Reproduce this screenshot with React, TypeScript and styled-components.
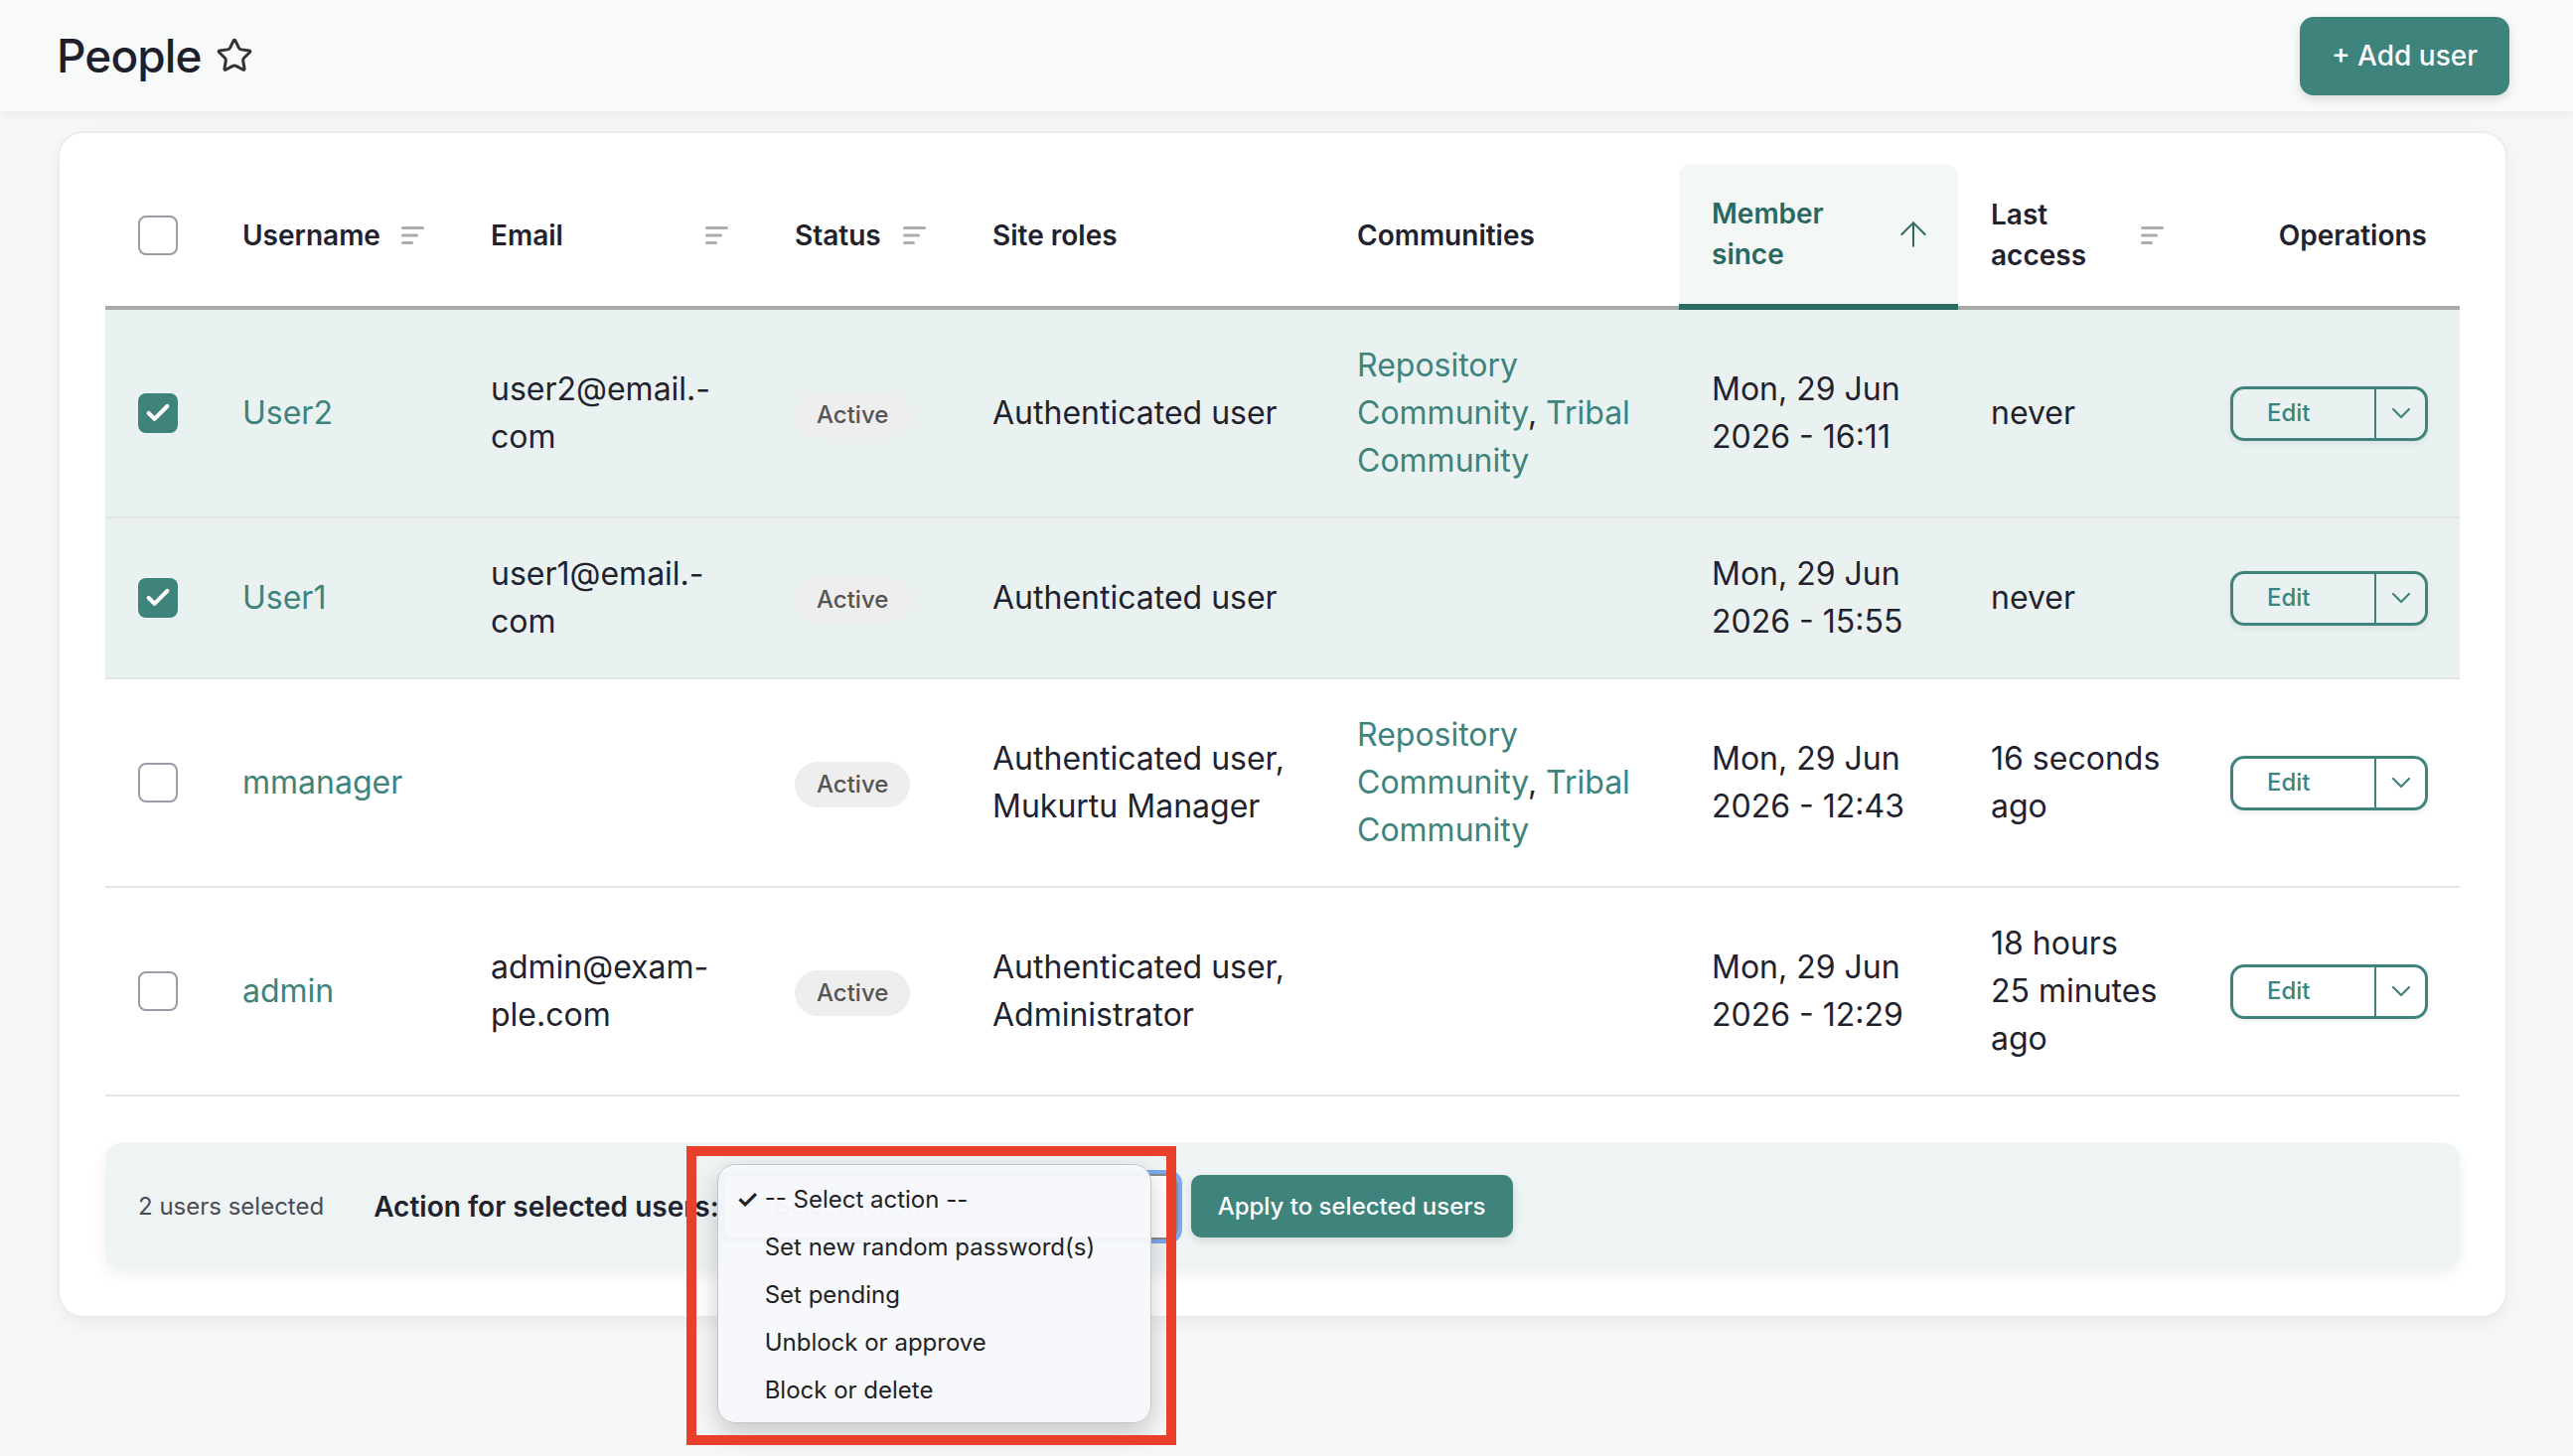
import React from 'react';
import styled, { createGlobalStyle } from 'styled-components';
import { Star, ArrowUp, ChevronDown, Check } from 'lucide-react';

const GlobalStyle = createGlobalStyle`
  html, body {
    margin: 0;
    padding: 0;
    background: #f6f8f8;
    font-family: Inter, "Noto Sans", "Liberation Sans", sans-serif;
    color: #22222e;
  }
  * { box-sizing: border-box; }
`;

const TopBar = styled.header`
  height: 112px;
  background: #f8fafa;
  box-shadow: 0 3px 12px rgba(0, 0, 0, 0.06);
  display: flex;
  align-items: center;
  justify-content: space-between;
  padding: 0 64px 0 57px;
  position: relative;
  z-index: 1;
`;

const TitleWrap = styled.div`
  display: flex;
  align-items: center;
  gap: 14px;
`;

const PageTitle = styled.h1`
  margin: 0;
  font-size: 46px;
  font-weight: 500;
  letter-spacing: -0.02em;
  color: #1f1f2b;
`;

const AddButton = styled.button`
  height: 79px;
  padding: 0 32px;
  border: none;
  border-radius: 14px;
  background: #3e837c;
  color: #fff;
  font-family: inherit;
  font-size: 28px;
  font-weight: 500;
  box-shadow: 0 4px 10px rgba(0, 0, 0, 0.12);
`;

const Main = styled.main`
  min-height: calc(100vh - 112px);
  padding: 20px 66px 60px 58px;
`;

const Card = styled.section`
  background: #fff;
  border: 2px solid #e9eded;
  border-radius: 26px;
  padding: 31px 46px 47px;
  box-shadow: 0 6px 18px rgba(0, 0, 0, 0.05);
`;

const Table = styled.table`
  width: 2370px;
  table-layout: fixed;
  border-collapse: separate;
  border-spacing: 0;
`;

const HeadCell = styled.th<{ $active?: boolean; $right?: boolean }>`
  padding: 30px 33px 29px;
  text-align: ${({ $right }) => ($right ? 'right' : 'left')};
  vertical-align: middle;
  font-size: 28px;
  line-height: 41px;
  font-weight: 600;
  color: ${({ $active }) => ($active ? '#2b6861' : '#22222e')};
  background: ${({ $active }) => ($active ? '#f3f7f6' : 'transparent')};
  border-bottom: ${({ $active }) => ($active ? '6px solid #2d6a62' : '4px solid #a9abab')};
  border-radius: ${({ $active }) => ($active ? '12px 12px 0 0' : '0')};
`;

const HeadInner = styled.div`
  display: flex;
  align-items: center;
  justify-content: space-between;
`;

const HeadLabel = styled.span<{ $narrow?: boolean }>`
  max-width: ${({ $narrow }) => ($narrow ? '130px' : 'none')};
`;

const SortArrow = styled.span`
  display: flex;
  margin-right: -8px;
`;

const Row = styled.tr<{ $selected?: boolean }>`
  background: ${({ $selected }) => ($selected ? '#eaf2f1' : '#fff')};
`;

const Cell = styled.td`
  padding: 32px 33px;
  vertical-align: middle;
  font-size: 32px;
  line-height: 48px;
  color: #22222e;
  border-bottom: 2px solid #e3e5e5;
`;

const Box = styled.span<{ $checked?: boolean }>`
  width: 40px;
  height: 40px;
  border-radius: 8px;
  display: flex;
  align-items: center;
  justify-content: center;
  background: ${({ $checked }) => ($checked ? '#3e837c' : '#fff')};
  border: ${({ $checked }) => ($checked ? 'none' : '2px solid #9a9ba4')};
`;

const UserLink = styled.a`
  color: #3e837c;
  text-decoration: none;
`;

const Pill = styled.span`
  display: inline-block;
  padding: 7px 22px;
  border-radius: 999px;
  background: #eeeeee;
  color: #555;
  font-size: 24px;
  line-height: 32px;
  font-weight: 500;
`;

const SplitButton = styled.div`
  display: flex;
  width: 199px;
  height: 55px;
  border: 3px solid #3e837c;
  border-radius: 14px;
  box-shadow: 0 2px 6px rgba(0, 0, 0, 0.08);
  color: #3e837c;
`;

const SplitMain = styled.span`
  flex: 1;
  display: flex;
  align-items: center;
  padding-left: 34px;
  font-size: 24px;
  font-weight: 500;
  border-right: 2px solid #3e837c;
`;

const SplitArrow = styled.span`
  width: 49px;
  display: flex;
  align-items: center;
  justify-content: center;
`;

const ActionBar = styled.div`
  margin-top: 47px;
  height: 127px;
  border-radius: 16px;
  background: #eef4f4;
  box-shadow: 0 6px 16px rgba(0, 0, 0, 0.06);
  display: flex;
  align-items: center;
  padding: 0 33px;
`;

const SelectedCount = styled.span`
  font-size: 24px;
  color: #4b4b55;
  margin-right: 50px;
`;

const ActionLabel = styled.span`
  font-size: 28px;
  font-weight: 600;
  color: #22222e;
  margin-right: 3px;
`;

const SelectWrap = styled.div`
  position: relative;
  width: 459px;
  height: 66px;
  margin-right: 13px;
`;

const SelectBox = styled.div`
  height: 100%;
  border: 2px solid #8a8a8a;
  border-radius: 10px;
  background: #fff;
  outline: 4px solid #7aa7ee;
  padding: 0 22px;
  display: flex;
  align-items: center;
  font-size: 24px;
  color: #888;
`;

const Popup = styled.div`
  position: absolute;
  left: -5px;
  top: -10px;
  width: 437px;
  height: 261px;
  padding: 11px 0 10px;
  border: 1px solid #c4c6c9;
  border-radius: 18px;
  background: rgba(246, 248, 251, 0.96);
  box-shadow: 0 10px 26px rgba(0, 0, 0, 0.2);
  z-index: 2;
`;

const Option = styled.div`
  height: 48px;
  display: flex;
  align-items: center;
  padding-left: 47px;
  position: relative;
  font-size: 24px;
  color: #222;
`;

const Tick = styled.span`
  position: absolute;
  left: 18px;
  font-size: 26px;
  font-weight: 600;
`;

const Annotation = styled.div`
  position: absolute;
  left: -36px;
  top: -28px;
  width: 493px;
  height: 301px;
  border: 10px solid #e8402a;
  pointer-events: none;
  z-index: 3;
`;

const ApplyButton = styled.button`
  height: 63px;
  padding: 0 27px;
  border: none;
  border-radius: 10px;
  background: #3e837c;
  color: #fff;
  font-family: inherit;
  font-size: 24px;
  font-weight: 500;
  box-shadow: 0 3px 8px rgba(0, 0, 0, 0.12);
`;

const SortLines = () => (
  <svg width="24" height="18" viewBox="0 0 24 18">
    <rect x="0" y="0" width="23" height="3" rx="1.5" fill="#ababb0" />
    <rect x="0" y="7.5" width="17" height="3" rx="1.5" fill="#ababb0" />
    <rect x="0" y="15" width="12" height="3" rx="1.5" fill="#ababb0" />
  </svg>
);

const Checkbox = ({ checked }: { checked?: boolean }) => (
  <Box $checked={checked}>{checked && <Check size={28} color="#fff" strokeWidth={3.5} />}</Box>
);

type User = {
  name: string;
  email: string;
  roles: string;
  communities: string[];
  since: string;
  last: string;
  selected: boolean;
};

const nb = (s: string) => s.replace(/ /g, '\u00a0');

const users: User[] = [
  {
    name: 'User2',
    email: 'user2@email.-com',
    roles: 'Authenticated user',
    communities: ['Repository Community', 'Tribal Community'],
    since: 'Mon, 29 Jun|2026 - 16:11',
    last: 'never',
    selected: true
  },
  {
    name: 'User1',
    email: 'user1@email.-com',
    roles: 'Authenticated user',
    communities: [],
    since: 'Mon, 29 Jun|2026 - 15:55',
    last: 'never',
    selected: true
  },
  {
    name: 'mmanager',
    email: '',
    roles: 'Authenticated user,|Mukurtu Manager',
    communities: ['Repository Community', 'Tribal Community'],
    since: 'Mon, 29 Jun|2026 - 12:43',
    last: '16 seconds|ago',
    selected: false
  },
  {
    name: 'admin',
    email: 'admin@exam-ple.com',
    roles: 'Authenticated user,|Administrator',
    communities: [],
    since: 'Mon, 29 Jun|2026 - 12:29',
    last: '18 hours|25 minutes|ago',
    selected: false
  }
];

const wrapParts = (s: string) => s.split('|').map(nb).join(' ');

const actions = ['Set new random password(s)', 'Set pending', 'Unblock or approve', 'Block or delete'];

const App: React.FC = () => {
  return (
    <>
      <GlobalStyle />
      <TopBar>
        <TitleWrap>
          <PageTitle>People</PageTitle>
          <Star size={38} color="#333" strokeWidth={1.9} />
        </TitleWrap>
        <AddButton>+ Add user</AddButton>
      </TopBar>
      <Main>
        <Card>
          <Table>
            <colgroup>
              <col style={{ width: 105 }} />
              <col style={{ width: 250 }} />
              <col style={{ width: 306 }} />
              <col style={{ width: 199 }} />
              <col style={{ width: 367 }} />
              <col style={{ width: 357 }} />
              <col style={{ width: 281 }} />
              <col style={{ width: 241 }} />
              <col style={{ width: 264 }} />
            </colgroup>
            <thead>
              <tr>
                <HeadCell><Checkbox /></HeadCell>
                <HeadCell><HeadInner><HeadLabel>Username</HeadLabel><SortLines /></HeadInner></HeadCell>
                <HeadCell><HeadInner><HeadLabel>Email</HeadLabel><SortLines /></HeadInner></HeadCell>
                <HeadCell><HeadInner><HeadLabel>Status</HeadLabel><SortLines /></HeadInner></HeadCell>
                <HeadCell>Site roles</HeadCell>
                <HeadCell>Communities</HeadCell>
                <HeadCell $active>
                  <HeadInner>
                    <HeadLabel $narrow>Member since</HeadLabel>
                    <SortArrow><ArrowUp size={40} color="#2d6a62" strokeWidth={1.2} /></SortArrow>
                  </HeadInner>
                </HeadCell>
                <HeadCell><HeadInner><HeadLabel $narrow>Last access</HeadLabel><SortLines /></HeadInner></HeadCell>
                <HeadCell $right>Operations</HeadCell>
              </tr>
            </thead>
            <tbody>
              {users.map(user => (
                <Row key={user.name} $selected={user.selected}>
                  <Cell><Checkbox checked={user.selected} /></Cell>
                  <Cell><UserLink href="#">{user.name}</UserLink></Cell>
                  <Cell>{user.email}</Cell>
                  <Cell><Pill>Active</Pill></Cell>
                  <Cell>{wrapParts(user.roles)}</Cell>
                  <Cell>
                    {user.communities.map((c, i) => (
                      <React.Fragment key={c}>
                        {i > 0 && ', '}
                        <UserLink href="#">{c}</UserLink>
                      </React.Fragment>
                    ))}
                  </Cell>
                  <Cell>{wrapParts(user.since)}</Cell>
                  <Cell>{wrapParts(user.last)}</Cell>
                  <Cell>
                    <SplitButton>
                      <SplitMain>Edit</SplitMain>
                      <SplitArrow><ChevronDown size={32} strokeWidth={1.6} /></SplitArrow>
                    </SplitButton>
                  </Cell>
                </Row>
              ))}
            </tbody>
          </Table>

          <ActionBar>
            <SelectedCount>2 users selected</SelectedCount>
            <ActionLabel>Action for selected users:</ActionLabel>
            <SelectWrap>
              <SelectBox>-- Select action --</SelectBox>
              <Popup>
                <Option><Tick>✓</Tick>-- Select action --</Option>
                {actions.map(a => (
                  <Option key={a}>{a}</Option>
                ))}
              </Popup>
              <Annotation />
            </SelectWrap>
            <ApplyButton>Apply to selected users</ApplyButton>
          </ActionBar>
        </Card>
      </Main>
    </>
  );
};

export default App;
